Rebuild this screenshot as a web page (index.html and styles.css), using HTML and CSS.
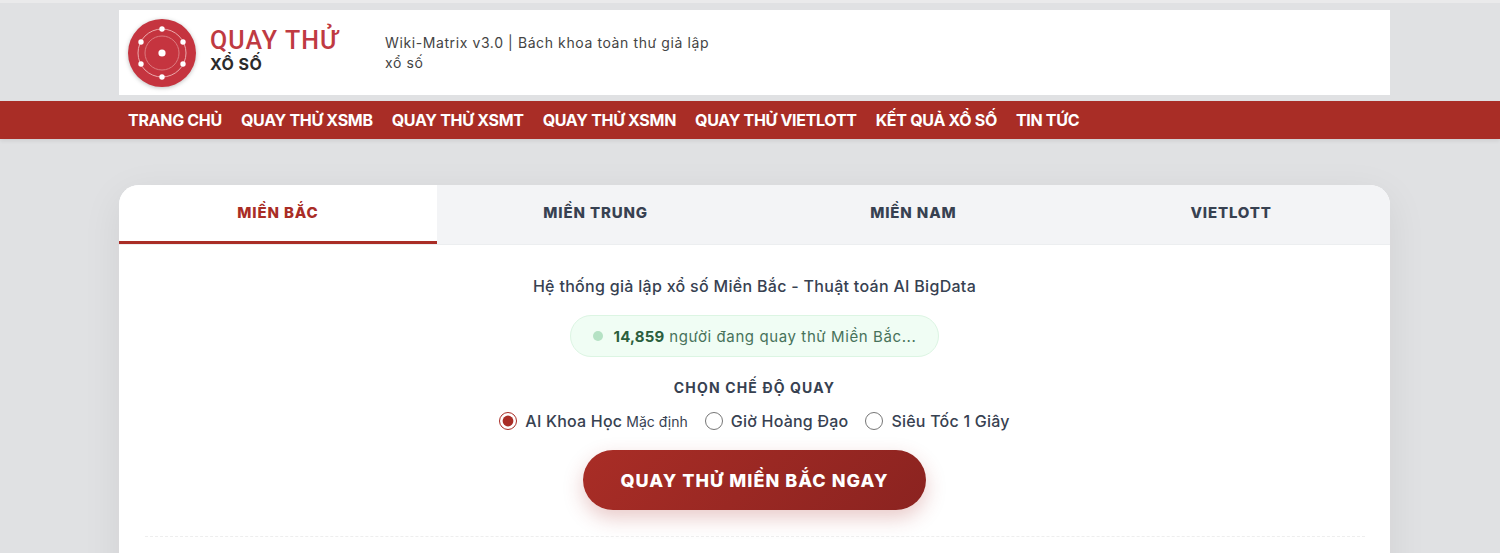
FILE: index.html
```html
<!DOCTYPE html>
<html lang="vi">
<head>
  <meta charset="UTF-8">
  <meta name="viewport" content="width=device-width, initial-scale=1.0">
  <title>Quay Thử Xổ Số</title>
  <link rel="stylesheet" href="styles.css">
</head>
<body>
  <header class="site-header">
    <div class="brand-bar">
      <a class="logo" href="#">
        <svg class="logo-icon" viewBox="0 0 70 70" aria-hidden="true">
          <circle cx="35" cy="35" r="34" fill="#c5343f"/>
          <circle cx="35" cy="35" r="24" fill="none" stroke="#eba9ab" stroke-width="1"/>
          <circle cx="35" cy="35" r="17" fill="none" stroke="#dc7b80" stroke-width="1"/>
          <circle cx="35" cy="35" r="3.6" fill="#fff"/>
          <circle cx="35" cy="11" r="2.7" fill="#fff"/>
          <circle cx="35" cy="59" r="2.7" fill="#fff"/>
          <circle cx="14" cy="24" r="2.7" fill="#fff"/>
          <circle cx="56" cy="24" r="2.7" fill="#fff"/>
          <circle cx="14" cy="46" r="2.7" fill="#fff"/>
          <circle cx="56" cy="46" r="2.7" fill="#fff"/>
        </svg>
        <span class="logo-text">
          <span class="logo-title">QUAY THỬ</span>
          <span class="logo-sub">XỔ SỐ</span>
        </span>
      </a>
      <p class="tagline">Wiki-Matrix v3.0 | Bách khoa toàn thư giả lập xổ số</p>
    </div>
    <nav class="main-nav">
      <div class="nav-inner">
        <a href="#">TRANG CHỦ</a>
        <a href="#">QUAY THỬ XSMB</a>
        <a href="#">QUAY THỬ XSMT</a>
        <a href="#">QUAY THỬ XSMN</a>
        <a href="#">QUAY THỬ VIETLOTT</a>
        <a href="#">KẾT QUẢ XỔ SỐ</a>
        <a href="#">TIN TỨC</a>
      </div>
    </nav>
  </header>

  <main class="card">
    <div class="tabs">
      <button class="tab active">MIỀN BẮC</button>
      <button class="tab">MIỀN TRUNG</button>
      <button class="tab">MIỀN NAM</button>
      <button class="tab">VIETLOTT</button>
    </div>
    <section class="panel">
      <p class="intro">Hệ thống giả lập xổ số Miền Bắc - Thuật toán AI BigData</p>
      <div class="live-pill">
        <span class="live-dot"></span>
        <span><b>14,859</b> người đang quay thử Miền Bắc...</span>
      </div>
      <h3 class="mode-title">CHỌN CHẾ ĐỘ QUAY</h3>
      <div class="modes">
        <label class="mode"><input type="radio" name="mode" checked> AI Khoa Học <small>Mặc định</small></label>
        <label class="mode"><input type="radio" name="mode"> Giờ Hoàng Đạo</label>
        <label class="mode"><input type="radio" name="mode"> Siêu Tốc 1 Giây</label>
      </div>
      <button class="spin-btn">QUAY THỬ MIỀN BẮC NGAY</button>
      <hr class="divider">
    </section>
  </main>
</body>
</html>
```

FILE: styles.css
```css
html {
  overflow: hidden;
}

body {
  margin: 0;
  height: 553px;
  overflow: hidden;
  font-family: 'Inter', 'Noto Sans', sans-serif;
  color: #333;
  background-color: #e0e1e3;
  border-top: 3px solid #eaeaeb;
  box-sizing: border-box;
}

a {
  text-decoration: none;
}

.site-header {
  padding-top: 7px;
}

.brand-bar {
  display: flex;
  align-items: center;
  width: 1271px;
  height: 85px;
  margin-left: 119px;
  padding-left: 8px;
  box-sizing: border-box;
  background: #fff;
}

.logo {
  display: flex;
  align-items: center;
  width: 258px;
}

.logo-icon {
  width: 70px;
  height: 70px;
  filter: drop-shadow(0 1px 2px rgba(0, 0, 0, 0.25));
}

.logo-text {
  display: flex;
  flex-direction: column;
  margin-left: 13px;
  padding-bottom: 6px;
}

.logo-title {
  font-family: 'Roboto', sans-serif;
  font-size: 25px;
  line-height: 30px;
  letter-spacing: 1.1px;
  font-weight: 500;
  color: #bf3a42;
}

.logo-sub {
  margin-top: -2px;
  font-size: 16px;
  line-height: 20px;
  font-weight: 700;
  letter-spacing: 0.5px;
  color: #2b2b2b;
}

.tagline {
  width: 340px;
  margin: 0;
  font-size: 14px;
  line-height: 20px;
  letter-spacing: 0.6px;
  color: #444;
}

.main-nav {
  margin-top: 6px;
  height: 38px;
  background: #a92d26;
  box-shadow: 0 2px 4px rgba(0, 0, 0, 0.08);
}

.nav-inner {
  display: flex;
  gap: 19px;
  width: 1271px;
  margin-left: 119px;
  padding-left: 9px;
  box-sizing: border-box;
}

.nav-inner a {
  font-size: 16px;
  line-height: 38px;
  font-weight: 700;
  letter-spacing: -0.3px;
  color: #fff;
  white-space: nowrap;
}

.card {
  width: 1271px;
  margin: 46px 0 0 119px;
  height: 500px;
  background: #fff;
  border-radius: 20px;
  overflow: hidden;
  box-shadow: 0 10px 40px rgba(0, 0, 0, 0.07);
}

.tabs {
  display: grid;
  grid-template-columns: repeat(4, 1fr);
  height: 60px;
  background: #f3f4f6;
  border-bottom: 1px solid #eceef0;
  box-sizing: border-box;
}

.tab {
  padding: 0 0 2px;
  border: none;
  border-bottom: 3px solid transparent;
  background: transparent;
  font-family: inherit;
  font-size: 15px;
  font-weight: 800;
  letter-spacing: 0.85px;
  color: #374151;
  cursor: pointer;
}

.tab.active {
  background: #fff;
  color: #a92d26;
  border-bottom-color: #a92d26;
}

.panel {
  display: flex;
  flex-direction: column;
  align-items: center;
  padding-top: 31px;
}

.intro {
  margin: 0;
  font-size: 16px;
  line-height: 20px;
  font-weight: 500;
  letter-spacing: 0.3px;
  color: #374151;
}

.live-pill {
  display: flex;
  align-items: center;
  gap: 11px;
  height: 42px;
  margin-top: 19px;
  padding: 0 22px;
  box-sizing: border-box;
  border: 1px solid #dcf5e3;
  border-radius: 21px;
  background: #f0fdf4;
  font-size: 15px;
  color: #47725a;
  letter-spacing: 0.6px;
}

.live-pill b {
  color: #2b5f3d;
  font-weight: 700;
  letter-spacing: 0.2px;
}

.live-dot {
  width: 10px;
  height: 10px;
  border-radius: 50%;
  background: #b5e2c4;
}

.mode-title {
  margin: 22px 0 0;
  font-size: 14px;
  line-height: 18px;
  font-weight: 700;
  letter-spacing: 1.15px;
  color: #374151;
}

.modes {
  display: flex;
  gap: 17px;
  margin-top: 12px;
  height: 24px;
}

.mode {
  display: flex;
  align-items: center;
  gap: 8px;
  font-size: 16px;
  font-weight: 500;
  letter-spacing: 0.22px;
  color: #374151;
  white-space: nowrap;
}

.mode input {
  width: 18px;
  height: 18px;
  margin: 0;
  accent-color: #a92d26;
}

.mode small {
  margin-left: -4px;
  font-size: 14px;
  font-weight: 400;
  letter-spacing: 0;
}

.spin-btn {
  width: 343px;
  height: 60px;
  margin-top: 17px;
  border: none;
  border-radius: 30px;
  background: linear-gradient(135deg, #a92d26 0%, #8b2320 100%);
  box-shadow: 0 8px 20px rgba(169, 45, 38, 0.25);
  color: #fff;
  font-family: inherit;
  font-size: 18px;
  font-weight: 800;
  letter-spacing: 1.05px;
  cursor: pointer;
}

.divider {
  width: 1220px;
  margin: 26px 0 0;
  border: none;
  border-top: 1px dashed #eeeeee;
}
```
